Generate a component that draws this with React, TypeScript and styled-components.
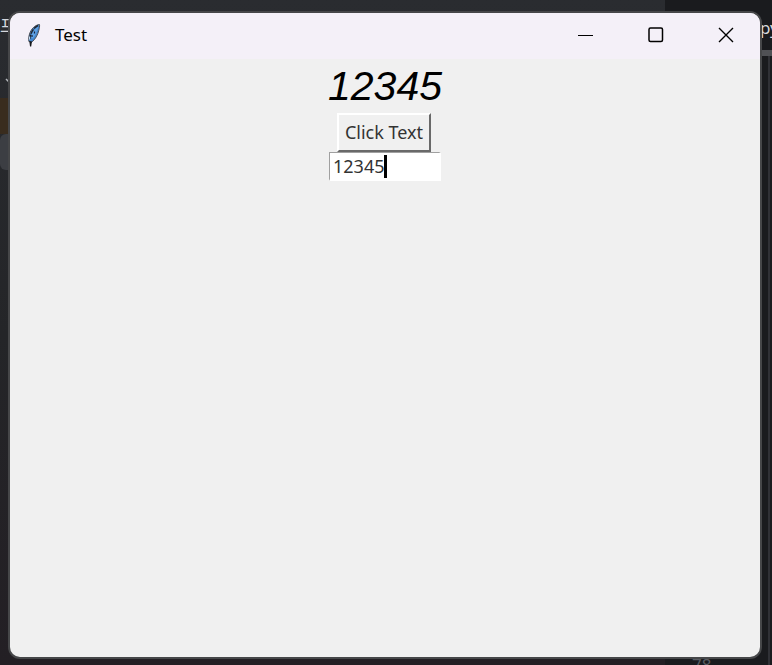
import React, { useState } from "react";
import styled, { createGlobalStyle } from "styled-components";

const GlobalStyle = createGlobalStyle`
  *, *::before, *::after { box-sizing: border-box; }
  body { margin: 0; background: #1c1d20; }
`;

const uiFont = `"Noto Sans", "Open Sans", "Noto Sans CJK KR", sans-serif`;

const Desktop = styled.div`
  position: relative;
  display: flex;
  min-height: 100vh;
  padding: 11px 10px 6px 8px;
  overflow: hidden;
  font-family: ${uiFont};
`;

const Backdrop = styled.div`
  position: absolute;
  inset: 0;
  display: flex;
  color: #d5d7dc;
  font-size: 17px;
  line-height: 24px;
`;

const SidePane = styled.div`
  flex: 1;
  background: linear-gradient(#2a2c30, #242528 50%, #231f24);
  padding-top: 14px;
`;

const PaneRow = styled.div<{ $height: number; $tone?: string; $round?: boolean }>`
  width: 60px;
  height: ${(p) => p.$height}px;
  background: ${(p) => p.$tone ?? "transparent"};
  border-radius: ${(p) => (p.$round ? "6px" : "0")};
`;

const EditorPane = styled.div`
  width: 107px;
  display: flex;
  flex-direction: column;
  justify-content: space-between;
  background: #1a1b1e;
`;

const EditorTab = styled.div`
  height: 56px;
  padding-top: 16px;
  padding-left: 95px;
  border-bottom: 6px solid #505155;
  white-space: nowrap;
  overflow: hidden;
`;

const EditorBody = styled.div`
  flex: 1;
  display: flex;
  align-items: flex-end;
  margin-right: 2px;
  padding-left: 27px;
  border-right: 2px solid #303136;
  color: #595b61;
`;

const LineNumber = styled.span`
  height: 12px;
`;

const Frame = styled.main`
  position: relative;
  flex: 1;
  display: flex;
  flex-direction: column;
  border: 2px solid #464749;
  border-radius: 12px;
  overflow: hidden;
  background: #f0f0f0;
`;

const TitleBar = styled.header`
  display: flex;
  align-items: center;
  height: 46px;
  padding: 0 0 2px 14px;
  background: #f4f0f8;
`;

const Title = styled.h1`
  flex: 1;
  margin: 0;
  padding-left: 11px;
  font-size: 17px;
  line-height: 24px;
  font-weight: 400;
  color: #000;
`;

const CaptionButton = styled.button`
  display: flex;
  align-items: center;
  justify-content: center;
  width: 70px;
  height: 44px;
  padding: 0 0 0 1px;
  border: 0;
  background: transparent;
  color: #000;
`;

const Content = styled.section`
  display: flex;
  flex-direction: column;
  align-items: center;
`;

const Display = styled.output`
  padding: 3px 0;
  font: italic 41px/48px "Liberation Sans", Arial, sans-serif;
  color: #000;
`;

const PushButton = styled.button`
  height: 39px;
  margin-right: 2px;
  padding: 0 6px 2px;
  border: 2px solid;
  border-color: #fff #696969 #696969 #fff;
  background: #f0f0f0;
  font: 18px/24px ${uiFont};
  color: #333;
`;

const EntryBox = styled.div`
  position: relative;
  width: 112px;
`;

const Entry = styled.input`
  display: block;
  width: 100%;
  height: 29px;
  padding: 0 3px;
  border: solid;
  border-color: #a0a0a0 #fff #fff #a0a0a0;
  border-width: 1px 2px 2px 1px;
  border-radius: 0;
  outline: 0;
  background: #fff;
  font: 18px/24px ${uiFont};
  color: #333;
`;

const Caret = styled.span`
  position: absolute;
  left: 55px;
  top: 3px;
  width: 3px;
  height: 23px;
  background: #000;
`;

const Feather = () => (
  <svg width="20" height="26" viewBox="0 0 20 26" aria-hidden="true">
    <path d="M15.500 2.500C11 3 7 7 5.500 12c-.8 3-1 5-.6 7.500l2.600.8c4-3 6.300-7.500 7.300-12 .5-2 1-4 .7-5.800z" fill="#4487cf" stroke="#4a4f58" strokeWidth="1" />
    <path d="M14.300 4.500C11 6.500 8 10.500 7 15l1.800 1.500c2.500-3 4.500-7.500 5.500-12z" fill="#62a3e4" />
    <path d="M14 3.500C9 6 6 12 5.800 17" fill="none" stroke="#22252a" strokeWidth="1.400" strokeDasharray="5 1" />
    <path d="M10.500 9.500v2M8 13v2" stroke="#17233a" strokeWidth="1.200" />
    <path d="M5.300 19l2.700.5-.8 5H6z" fill="#15171b" />
    <path d="M5.500 14.500v3" stroke="#c4d9ed" strokeWidth="1" />
  </svg>
);

export default function App() {
  const [text, setText] = useState("12345");
  const [shown, setShown] = useState("12345");
  return (
    <Desktop>
      <GlobalStyle />
      <Backdrop aria-hidden="true">
        <SidePane>
          프
          <PaneRow $height={33} />
          <svg width="16" height="14" viewBox="0 0 16 14">
            <path d="M6 4l5 5 5-5" fill="none" stroke="#b5b7bb" strokeWidth="1.500" />
          </svg>
          <PaneRow $height={3} />
          <PaneRow $height={36} $tone="#392c1e" />
          <PaneRow $height={36} $tone="#3c3e43" $round />
        </SidePane>
        <EditorPane>
          <EditorTab>py</EditorTab>
          <EditorBody>
            <LineNumber>78</LineNumber>
          </EditorBody>
        </EditorPane>
      </Backdrop>
      <Frame>
        <TitleBar>
          <Feather />
          <Title>Test</Title>
          <CaptionButton aria-label="Minimize">
            <svg width="16" height="16" viewBox="0 0 16 16">
              <path d="M0 8.500h15" stroke="currentColor" />
            </svg>
          </CaptionButton>
          <CaptionButton aria-label="Maximize">
            <svg width="16" height="16" viewBox="0 0 16 16">
              <rect x="1" y="1" width="13.500" height="13.500" rx="1.500" fill="none" stroke="currentColor" strokeWidth="1.500" />
            </svg>
          </CaptionButton>
          <CaptionButton aria-label="Close">
            <svg width="16" height="16" viewBox="0 0 16 16">
              <path d="M1 1l14 14M15 1L1 15" stroke="currentColor" strokeWidth="1.400" />
            </svg>
          </CaptionButton>
        </TitleBar>
        <Content>
          <Display>{shown}</Display>
          <PushButton onClick={() => setShown(text)}>Click Text</PushButton>
          <EntryBox>
            <Entry aria-label="Text" value={text} onChange={(e) => setText(e.target.value)} />
            <Caret />
          </EntryBox>
        </Content>
      </Frame>
    </Desktop>
  );
}
